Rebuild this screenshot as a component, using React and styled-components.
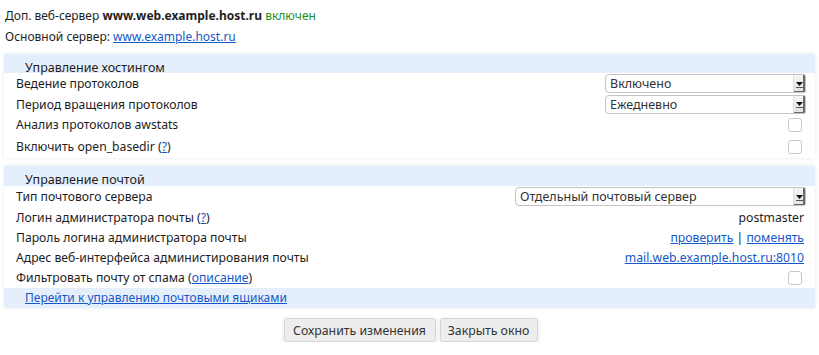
import styled, { createGlobalStyle } from "styled-components";

const GlobalStyle = createGlobalStyle`
  body {
    margin: 0;
    background: #fff;
    font-family: "Noto Sans", "Open Sans", sans-serif;
    font-size: 12px;
    color: #1e1e1e;
  }
  a {
    color: #1558c8;
    text-decoration: underline;
  }
`;

const Page = styled.div`
  padding: 5px 4px 0 4px;
`;

const InfoLine = styled.div`
  line-height: 21px;
  padding-left: 1px;
`;

const Green = styled.span`
  color: #1f8f1f;
`;

const Panel = styled.section`
  margin-top: ${(p) => p.$gap}px;
  background: #fff;
  box-shadow: 0 0 4px rgba(0, 0, 0, 0.09);
`;

const PanelTitle = styled.div`
  background: #e5effb;
  height: ${(p) => p.$h}px;
  line-height: ${(p) => p.$h + 8}px;
  padding-left: 21px;
  font-size: 12.5px;
  position: relative;
`;

const Row = styled.div`
  display: flex;
  align-items: center;
  justify-content: space-between;
  min-height: ${(p) => p.$h || 20}px;
  padding: 0 10px 0 12px;
  font-size: 12.2px;
`;

const Label = styled.span``;

const Value = styled.span`
  padding-right: 1px;
`;

const SelectBox = styled.div`
  display: flex;
  width: ${(p) => p.$w}px;
  height: 19px;
  border: 1px solid #c4c4c4;
  border-radius: 4px 2px 2px 4px;
  box-sizing: border-box;
  background: #fff;
  overflow: hidden;
  margin-right: -1px;
`;

const Select = styled.select`
  flex: 1;
  appearance: none;
  border: none;
  outline: none;
  background: transparent;
  font-family: inherit;
  font-size: 12.5px;
  color: #333;
  padding: 0 0 0 4px;
  margin: 0;
  height: 17px;
  line-height: 17px;
`;

const Arrow = styled.span`
  width: 11px;
  display: flex;
  align-items: center;
  justify-content: center;
  background: linear-gradient(#f6f6f6, #e2e2e2);
  border-left: 1px solid #e0e0e0;
  box-shadow: inset -2px -1px 0 #6a6a6a;
`;

const Check = styled.input.attrs({ type: "checkbox" })`
  appearance: none;
  width: 14px;
  height: 14px;
  margin: 0 3px 0 0;
  border: 1px solid #c8c8c8;
  border-radius: 3px;
  background: #fff;
`;

const Footer = styled.div`
  background: #e5effb;
  height: 20px;
  line-height: 20px;
  padding-left: 21px;
  font-size: 12px;
`;

const Actions = styled.div`
  display: flex;
  justify-content: center;
  gap: 4px;
  margin-top: 10px;
  padding-left: 2px;
`;

const Button = styled.button`
  width: ${(p) => p.$w}px;
  height: 24px;
  padding: 0;
  font-family: inherit;
  font-size: 12.3px;
  color: #333;
  background: #ededed;
  border: 1px solid #d6d6d6;
  border-radius: 3px;
  box-shadow: 0 1px 4px rgba(0, 0, 0, 0.12);
`;

const DropArrow = () => (
  <Arrow>
    <svg width="7" height="8" viewBox="0 0 7 8">
      <path d="M0 2 L7 2 L3.5 6 Z" fill="#111" />
      <rect x="0" y="7" width="7" height="1" fill="#555" />
    </svg>
  </Arrow>
);

const Dropdown = ({ width, value }) => (
  <SelectBox $w={width}>
    <Select defaultValue={value}>
      <option>{value}</option>
    </Select>
    <DropArrow />
  </SelectBox>
);

export default function App() {
  return (
    <>
      <GlobalStyle />
      <Page>
        <InfoLine>
          Доп. веб-сервер <b>www.web.example.host.ru</b> <Green>включен</Green>
        </InfoLine>
        <InfoLine>
          Основной сервер: <a href="#">www.example.host.ru</a>
        </InfoLine>

        <Panel $gap={7}>
          <PanelTitle $h={19}>Управление хостингом</PanelTitle>
          <Row $h={21}>
            <Label>Ведение протоколов</Label>
            <Dropdown width={201} value="Включено" />
          </Row>
          <Row $h={20}>
            <Label>Период вращения протоколов</Label>
            <Dropdown width={201} value="Ежедневно" />
          </Row>
          <Row $h={21}>
            <Label>Анализ протоколов awstats</Label>
            <Check />
          </Row>
          <Row $h={23}>
            <Label>
              Включить open_basedir (<a href="#">?</a>)
            </Label>
            <Check />
          </Row>
        </Panel>

        <Panel $gap={8}>
          <PanelTitle $h={20}>Управление почтой</PanelTitle>
          <Row $h={21}>
            <Label>Тип почтового сервера</Label>
            <Dropdown width={291} value="Отдельный почтовый сервер" />
          </Row>
          <Row>
            <Label>
              Логин администратора почты (<a href="#">?</a>)
            </Label>
            <Value>postmaster</Value>
          </Row>
          <Row>
            <Label>Пароль логина администратора почты</Label>
            <Value>
              <a href="#">проверить</a> | <a href="#">поменять</a>
            </Value>
          </Row>
          <Row>
            <Label>Адрес веб-интерфейса администирования почты</Label>
            <Value>
              <a href="#">mail.web.example.host.ru:8010</a>
            </Value>
          </Row>
          <Row $h={21}>
            <Label>
              Фильтровать почту от спама (<a href="#">описание</a>)
            </Label>
            <Check />
          </Row>
          <Footer>
            <a href="#">Перейти к управлению почтовыми ящиками</a>
          </Footer>
        </Panel>

        <Actions>
          <Button $w={152}>Сохранить изменения</Button>
          <Button $w={98}>Закрыть окно</Button>
        </Actions>
      </Page>
    </>
  );
}
